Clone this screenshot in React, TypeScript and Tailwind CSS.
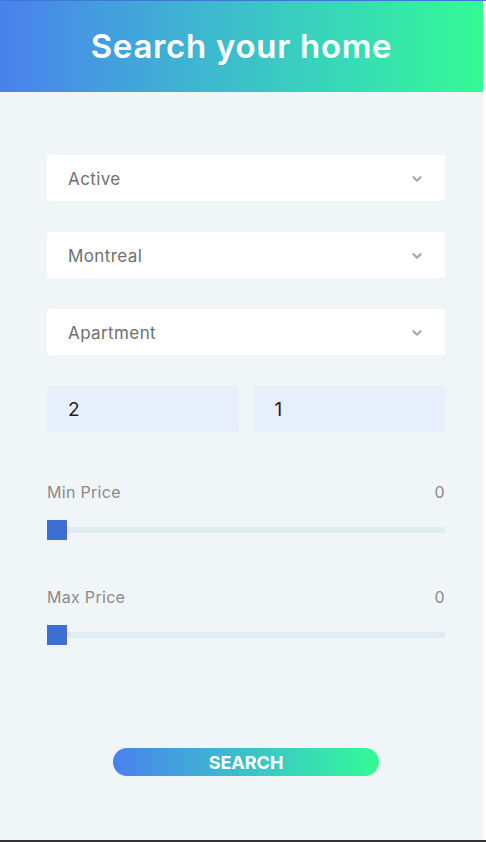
import { ChevronDown } from "lucide-react";

const font = { fontFamily: "Inter, 'Open Sans', sans-serif" };

function SelectBox({ value }: { value: string }) {
  return (
    <div className="flex h-[46px] w-[398px] items-center justify-between rounded-[3px] bg-white pl-[21px] pr-[21px]">
      <span className="pt-[3px] text-[17px] tracking-[0.4px] text-[#707070]">{value}</span>
      <ChevronDown className="mt-[2px] h-[14px] w-[14px] text-[#a8a8a8]" strokeWidth={4} />
    </div>
  );
}

function PriceSlider({ label }: { label: string }) {
  return (
    <div className="flex w-[398px] flex-col">
      <div className="flex items-center justify-between text-[16px] tracking-[0.3px] text-[#8a8a8a]">
        <span>{label}</span>
        <span>0</span>
      </div>
      <div className="mt-[16px] flex h-[20px] items-center">
        <div className="h-[20px] w-[20px] bg-[#3d6fd2]" />
        <div className="h-[6px] flex-1 bg-[#e1ecf2]" />
      </div>
    </div>
  );
}

export default function App() {
  return (
    <div className="flex h-[842px] w-[486px] flex-col bg-white" style={font}>
      <div className="h-px bg-[#3f77d4]" />
      <div className="flex flex-1">
        <div className="flex w-[483px] flex-col bg-[#f0f5f8]">
          <div className="flex h-[91px] items-center justify-center bg-gradient-to-r from-[#4a80ec] to-[#34fa93]">
            <h1 className="text-[33px] font-semibold tracking-[0.7px] text-white">Search your home</h1>
          </div>
          <div className="flex flex-col pl-[47px] pt-[63px]">
            <div className="flex flex-col gap-[31px]">
              <SelectBox value="Active" />
              <SelectBox value="Montreal" />
              <SelectBox value="Apartment" />
              <div className="flex w-[398px] gap-[15px]">
                <div className="flex h-[46px] flex-1 items-center rounded-[3px] bg-[#e8effc] pl-[21px] pt-[2px] text-[19px] text-[#1e1e1e]">2</div>
                <div className="flex h-[46px] flex-1 items-center rounded-[3px] bg-[#e8effc] pl-[21px] pt-[2px] text-[19px] text-[#1e1e1e]">1</div>
              </div>
            </div>
            <div className="mt-[48px]">
              <PriceSlider label="Min Price" />
            </div>
            <div className="mt-[45px]">
              <PriceSlider label="Max Price" />
            </div>
            <div className="mt-[103px] flex w-[398px] justify-center">
              <button className="flex h-[28px] w-[266px] items-center justify-center rounded-full bg-gradient-to-r from-[#4a80ec] to-[#34fa93] text-[18px] font-bold text-white">
                SEARCH
              </button>
            </div>
          </div>
        </div>
      </div>
      <div className="h-[2px] bg-[#333333]" />
    </div>
  );
}
